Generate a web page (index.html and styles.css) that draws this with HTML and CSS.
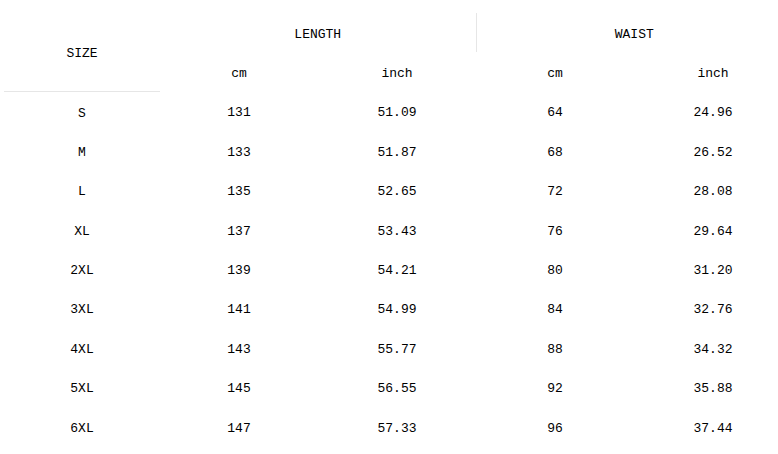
FILE: index.html
```html
<!DOCTYPE html>
<html>
<head>
<meta charset="utf-8">
<link rel="stylesheet" href="styles.css">
</head>
<body>
<table class="sizes">
  <colgroup>
    <col class="c-size"><col class="c-val"><col class="c-val"><col class="c-val"><col class="c-val">
  </colgroup>
  <thead>
    <tr>
      <th rowspan="2" class="size-head">SIZE</th>
      <th colspan="2" class="group sep">LENGTH</th>
      <th colspan="2" class="group">WAIST</th>
    </tr>
    <tr>
      <th>cm</th><th>inch</th><th>cm</th><th>inch</th>
    </tr>
  </thead>
  <tbody>
    <tr><td>S</td><td>131</td><td>51.09</td><td>64</td><td>24.96</td></tr>
    <tr><td>M</td><td>133</td><td>51.87</td><td>68</td><td>26.52</td></tr>
    <tr><td>L</td><td>135</td><td>52.65</td><td>72</td><td>28.08</td></tr>
    <tr><td>XL</td><td>137</td><td>53.43</td><td>76</td><td>29.64</td></tr>
    <tr><td>2XL</td><td>139</td><td>54.21</td><td>80</td><td>31.20</td></tr>
    <tr><td>3XL</td><td>141</td><td>54.99</td><td>84</td><td>32.76</td></tr>
    <tr><td>4XL</td><td>143</td><td>55.77</td><td>88</td><td>34.32</td></tr>
    <tr><td>5XL</td><td>145</td><td>56.55</td><td>92</td><td>35.88</td></tr>
    <tr><td>6XL</td><td>147</td><td>57.33</td><td>96</td><td>37.44</td></tr>
  </tbody>
</table>
</body>
</html>
```
FILE: styles.css
```css
html, body {
  margin: 0;
  padding: 0;
  background: #fff;
}
body {
  padding: 13px 0 0 4px;
  font-family: "Liberation Mono", "DejaVu Sans Mono", monospace;
  font-size: 13px;
  color: #000;
  overflow: hidden;
}
.sizes {
  border-collapse: collapse;
  table-layout: fixed;
  width: 788px;
}
.c-size { width: 156px; }
.c-val { width: 158px; }
.sizes tr {
  height: 39.4px;
}
.sizes th,
.sizes td {
  padding: 3px 0 0;
  text-align: center;
  vertical-align: middle;
  font-weight: normal;
  border: 0;
}
.size-head {
  border-bottom: 1px solid #e6e6e6 !important;
}
.sep {
  border-right: 1px solid #e6e6e6 !important;
}
```
